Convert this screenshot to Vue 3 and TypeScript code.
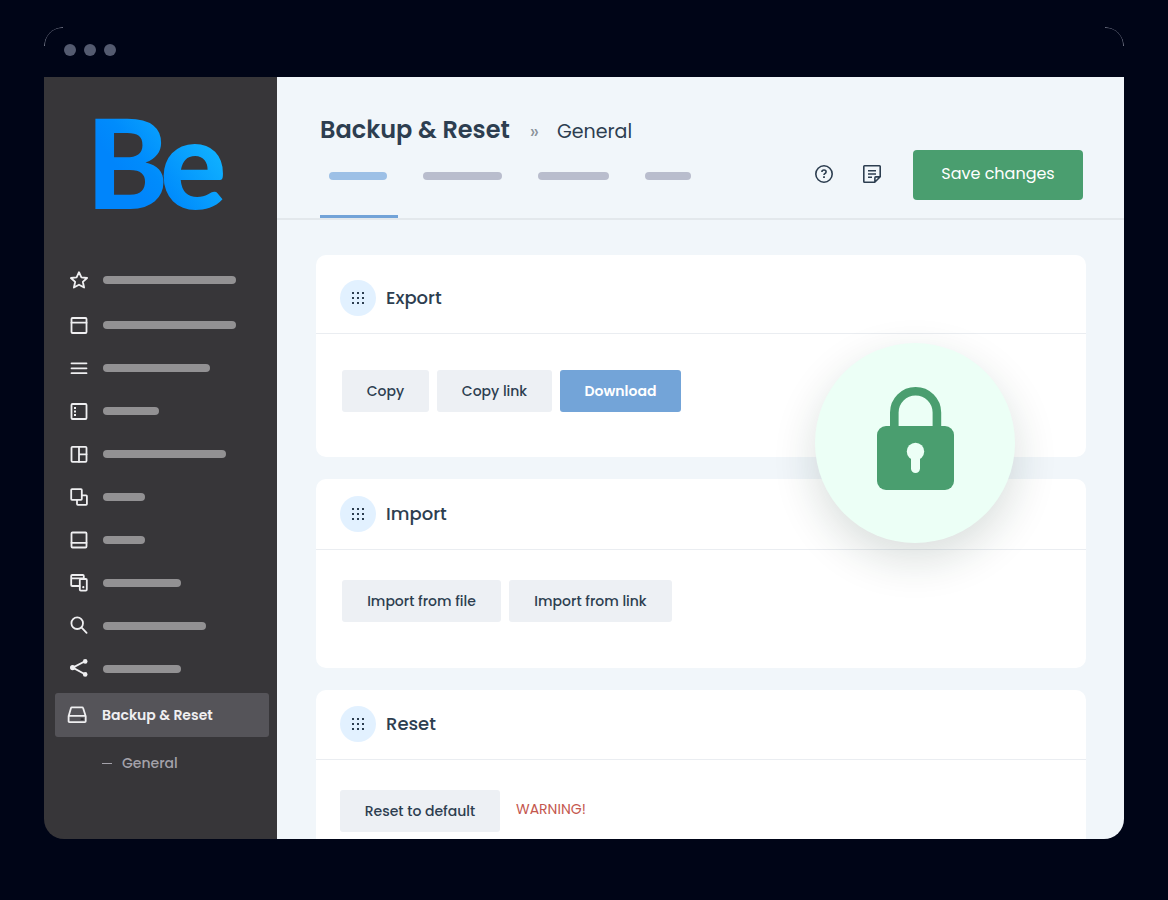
<script setup lang="ts">
interface MenuEntry {
  icon: string
  bar: number
  label: string
}
interface Action {
  label: string
  width: number
  primary?: boolean
}
interface Panel {
  id: string
  title: string
  actions: Action[]
  warning?: string
}

const menu: MenuEntry[] = [
  { icon: 'star', bar: 133, label: 'Favourites' },
  { icon: 'window', bar: 133, label: 'Header' },
  { icon: 'menu', bar: 107, label: 'Menu' },
  { icon: 'sidebar', bar: 56, label: 'Sidebars' },
  { icon: 'layout', bar: 123, label: 'Layout' },
  { icon: 'layers', bar: 42, label: 'Blog' },
  { icon: 'footer', bar: 42, label: 'Footer' },
  { icon: 'devices', bar: 78, label: 'Responsive' },
  { icon: 'search', bar: 103, label: 'Search' },
  { icon: 'share', bar: 78, label: 'Social' },
]

const tabs: number[] = [58, 79, 71, 46]

const panels: Panel[] = [
  {
    id: 'export',
    title: 'Export',
    actions: [
      { label: 'Copy', width: 87 },
      { label: 'Copy link', width: 115 },
      { label: 'Download', width: 121, primary: true },
    ],
  },
  {
    id: 'import',
    title: 'Import',
    actions: [
      { label: 'Import from file', width: 159 },
      { label: 'Import from link', width: 163 },
    ],
  },
  {
    id: 'reset',
    title: 'Reset',
    actions: [{ label: 'Reset to default', width: 160 }],
    warning: 'WARNING!',
  },
]
</script>

<template>
  <div class="page">
    <div class="window">
      <div class="titlebar"><i></i><i></i><i></i></div>
      <div class="body">
        <aside class="sidebar">
          <div class="logo">
            <svg viewBox="0 0 150 182" width="150" height="182">
              <defs>
                <linearGradient id="brand" gradientUnits="userSpaceOnUse" x1="50" y1="112" x2="128" y2="52">
                  <stop offset="0" stop-color="#0085fb" />
                  <stop offset=".25" stop-color="#008cfc" />
                  <stop offset="1" stop-color="#12b6ff" />
                </linearGradient>
              </defs>
              <text fill="url(#brand)" x="2 76" y="132">Be</text>
            </svg>
          </div>
          <nav class="menu">
            <a v-for="m in menu" :key="m.icon" class="item" href="#" :aria-label="m.label">
              <svg class="icon" viewBox="0 0 18 18">
                <path v-if="m.icon === 'star'" d="M9 1.2l2.4 5.2 5.7.6-4.3 3.8 1.3 5.7L9 13.7l-5.1 2.8 1.3-5.7L.9 7l5.7-.6z" />
                <template v-else-if="m.icon === 'window'">
                  <rect x="1.5" y="2" width="15" height="15" rx="1" /><path d="M1.5 6.7h15" />
                </template>
                <path v-else-if="m.icon === 'menu'" d="M1.5 4.3h15M1.5 9.3h15M1.5 14.2h15" />
                <template v-else-if="m.icon === 'sidebar'">
                  <rect x="1.5" y="2" width="15" height="15" rx="1" />
                  <path class="fill" d="M4 5h2v2H4zM4 8.5h2v2H4zM4 12h2v2H4z" />
                </template>
                <template v-else-if="m.icon === 'layout'">
                  <rect x="1.5" y="1.8" width="15" height="15" rx="1" /><path d="M9 1.8v15M9 9.3h7.5" />
                </template>
                <template v-else-if="m.icon === 'layers'">
                  <rect x="1.2" y="1.2" width="10.6" height="10.6" rx=".8" />
                  <path d="M12 7.3h4.1q.8 0 .8.8v8q0 .8-.8.8H7.8q-.8 0-.8-.8v-4.2" />
                </template>
                <template v-else-if="m.icon === 'footer'">
                  <rect x="1.5" y="1.5" width="15" height="15" rx="1" /><path d="M1.5 11.8h15" />
                </template>
                <template v-else-if="m.icon === 'devices'">
                  <path d="M9.5 12H2.2q-1 0-1-1V2q0-1 1-1h10.6q1 0 1 1v2.4M1.2 4.4h12.6" />
                  <rect x="9.8" y="5" width="7" height="11.6" rx="1" />
                  <circle class="fill" cx="13.3" cy="13.2" r="1.1" />
                </template>
                <template v-else-if="m.icon === 'search'">
                  <circle cx="7.2" cy="6.2" r="5.8" /><path d="M11.4 10.4L16.6 15.8" />
                </template>
                <template v-else>
                  <path d="M15 1.2L2.8 7.6 15 14.3" />
                  <circle class="fill" cx="15.2" cy="1.4" r="2.3" />
                  <circle class="fill" cx="2.6" cy="7.6" r="2.6" />
                  <circle class="fill" cx="15.2" cy="14.4" r="2.3" />
                </template>
              </svg>
              <span class="bar" :style="{ width: m.bar + 'px' }"></span>
            </a>
            <a class="item active" href="#">
              <svg class="icon drive" viewBox="0 0 20 18">
                <path d="M4.8 1.4h10.4q.7 0 .9.7l2.6 8.2v5q0 .9-.9.9H2.5q-.9 0-.9-.9v-5L4 2q.2-.6.8-.6zM1.6 9.9h17" />
                <path class="led" d="M14.4 13.1h1.6" />
              </svg>
              Backup &amp; Reset
            </a>
            <a class="sub" href="#"><i></i>General</a>
          </nav>
        </aside>

        <main class="main">
          <header class="header">
            <div class="heading">
              <div class="crumbs">
                <h1>Backup &amp; Reset</h1>
                <span class="sep">»</span>
                <span class="current">General</span>
              </div>
              <div class="tabs">
                <button
                  v-for="(w, i) in tabs"
                  :key="i"
                  class="tab"
                  :class="{ selected: i === 0 }"
                  :aria-label="'Tab ' + (i + 1)"
                >
                  <span class="bar" :style="{ width: w + 'px' }"></span>
                </button>
              </div>
            </div>
            <div class="tools">
              <button class="tool" aria-label="Help">
                <svg viewBox="0 0 18 18">
                  <circle cx="9" cy="9" r="8.2" />
                  <path d="M6.9 7q0-2 2.1-2t2.1 1.8q0 1.1-1.1 1.7-1 .5-1 1.5" />
                  <path class="fill" d="M8.1 11.3h1.8v1.8H8.1z" />
                </svg>
              </button>
              <button class="tool" aria-label="Notes">
                <svg viewBox="0 0 18 18">
                  <path d="M11.7 17.2H1.5q-.7 0-.7-.7v-15q0-.7.7-.7h15q.7 0 .7.7v10.2zM11.9 17v-4.3q0-.8.8-.8H17" />
                  <path d="M5 5.8h8M5 9h8M5 12.2h4" />
                </svg>
              </button>
              <button class="save">Save changes</button>
            </div>
          </header>

          <div class="content">
            <section v-for="p in panels" :key="p.id" class="card" :class="p.id">
              <div class="card-head">
                <span class="grip">
                  <svg viewBox="0 0 12 12">
                    <path d="M0 0h2v2H0zM5 0h2v2H5zM10 0h2v2h-2zM0 5h2v2H0zM5 5h2v2H5zM10 5h2v2h-2zM0 10h2v2H0zM5 10h2v2H5zM10 10h2v2h-2z" />
                  </svg>
                </span>
                <h2>{{ p.title }}</h2>
              </div>
              <div class="card-body">
                <button
                  v-for="a in p.actions"
                  :key="a.label"
                  class="btn"
                  :class="{ primary: a.primary }"
                  :style="{ minWidth: a.width + 'px' }"
                >
                  {{ a.label }}
                </button>
                <span v-if="p.warning" class="warning">{{ p.warning }}</span>
              </div>
            </section>

            <div class="lock">
              <svg viewBox="0 0 200 200">
                <path class="shackle" d="M79.3 86V69.5a21.3 21.3 0 0 1 42.6 0V86" />
                <rect class="case" x="62" y="83" width="77" height="64" rx="9" />
                <circle class="hole" cx="100.5" cy="108.5" r="8.7" />
                <path class="slot" d="M100.5 110v15.5" />
              </svg>
            </div>
          </div>
        </main>
      </div>
    </div>
  </div>
</template>

<style>
body {
  margin: 0;
  background: #000517;
}
</style>

<style scoped>
* {
  box-sizing: border-box;
}
.page {
  height: 100vh;
  padding: 27px 44px 61px;
  background: #000517;
  font-family: Poppins, Inter, 'Liberation Sans', sans-serif;
  color: #2d3e50;
}
button {
  border: 0;
  padding: 0;
  background: none;
  color: inherit;
  font: inherit;
  cursor: pointer;
}
a {
  color: inherit;
  text-decoration: none;
}
.window {
  display: flex;
  flex-direction: column;
  height: 100%;
  border-radius: 20px;
  overflow: hidden;
}
.titlebar {
  position: relative;
  flex: none;
  display: flex;
  align-items: center;
  gap: 8px;
  height: 50px;
  padding: 0 20px 4px;
}
.titlebar::before,
.titlebar::after {
  content: '';
  position: absolute;
  top: 0;
  width: 18px;
  height: 18px;
  border-top: 1px solid #7c8192;
}
.titlebar::before {
  left: 0;
  border-left: 1px solid #7c8192;
  border-top-left-radius: 18px;
}
.titlebar::after {
  right: 0;
  border-right: 1px solid #7c8192;
  border-top-right-radius: 18px;
}
.titlebar i {
  width: 12px;
  height: 12px;
  border-radius: 50%;
  background: #545b70;
}
.body {
  flex: 1;
  min-height: 0;
  display: flex;
}
.sidebar {
  flex: none;
  width: 233px;
  background: #373639;
}
.logo {
  height: 182px;
  padding-left: 40px;
}
.logo svg {
  display: block;
  font-family: Lato, sans-serif;
  font-weight: 900;
  font-size: 124px;
}
.menu {
  display: flex;
  flex-direction: column;
  gap: 1px;
}
.item {
  display: flex;
  align-items: center;
  gap: 15px;
  height: 42px;
  padding-left: 26px;
}
.item:first-child {
  margin-bottom: 2px;
}
.icon {
  flex: none;
  width: 18px;
  height: 18px;
  fill: none;
  stroke: #efeff1;
  stroke-width: 1.8;
  stroke-linejoin: round;
  stroke-linecap: round;
  overflow: visible;
}
.icon .fill {
  fill: #efeff1;
  stroke: none;
}
.drive {
  width: 20px;
}
.drive .led {
  stroke: #2e2d31;
}
.bar {
  display: block;
  height: 8px;
  border-radius: 4px;
  background: #929193;
}
.item.active {
  height: 44px;
  margin: 2px 8px 0 11px;
  padding-left: 12px;
  border-radius: 3px;
  background: #555459;
  color: #efeff1;
  font-size: 14px;
  font-weight: 600;
}
.sub {
  display: flex;
  align-items: center;
  gap: 10px;
  height: 50px;
  padding-left: 58px;
  color: #a4a2aa;
  font-size: 14px;
  font-weight: 500;
}
.sub i {
  width: 10px;
  height: 1px;
  background: #a4a2aa;
}
.main {
  flex: 1;
  min-width: 0;
  overflow: hidden;
  background: #f1f6fa;
}
.header {
  display: flex;
  justify-content: space-between;
  padding: 35px 41px 0 43px;
  border-bottom: 2px solid #e3e8ec;
}
.crumbs {
  display: flex;
  align-items: baseline;
  height: 36px;
}
h1 {
  margin: 0;
  font-size: 24px;
  line-height: 36px;
  font-weight: 600;
}
.sep {
  margin: 0 18px 0 20px;
  color: #8b929b;
  font-size: 20px;
}
.current {
  font-size: 19px;
}
.tabs {
  display: flex;
  gap: 16px;
}
.tab {
  display: flex;
  height: 70px;
  padding: 24px 11px 0 9px;
  border-bottom: 3px solid transparent;
}
.tab .bar {
  background: #b9bdcd;
}
.tab.selected {
  border-color: #72a3d8;
}
.tab.selected .bar {
  background: #9dc0e6;
}
.tools {
  display: flex;
  align-items: center;
  gap: 30px;
  height: 50px;
  margin-top: 38px;
}
.tool {
  display: flex;
  padding-bottom: 2px;
}
.tool svg {
  width: 18px;
  height: 18px;
  fill: none;
  stroke: #2d3e50;
  stroke-width: 1.6;
  stroke-linejoin: round;
}
.tool .fill {
  fill: #2d3e50;
  stroke: none;
}
.save {
  width: 170px;
  height: 50px;
  margin-left: 2px;
  padding-bottom: 4px;
  border-radius: 4px;
  background: #4a9e6f;
  color: #fff;
  font-size: 16px;
}
.content {
  position: relative;
  display: flex;
  flex-direction: column;
  gap: 22px;
  padding: 35px 38px 0 39px;
}
.card {
  border-radius: 10px;
  background: #fff;
}
.card-head {
  display: flex;
  align-items: center;
  gap: 10px;
  padding: 17px 24px;
  border-bottom: 1px solid #eaedf1;
}
.grip {
  display: flex;
  align-items: center;
  justify-content: center;
  width: 36px;
  height: 36px;
  border-radius: 50%;
  background: #e2f1ff;
}
.grip svg {
  width: 12px;
  height: 12px;
  fill: #2d3e50;
}
h2 {
  margin: 0;
  padding-bottom: 2px;
  font-size: 18px;
  font-weight: 500;
}
.card-body {
  display: flex;
  gap: 8px;
  padding: 30px 26px 46px;
}
.export .card-head {
  padding-top: 25px;
}
.export .card-body {
  padding-top: 36px;
  padding-bottom: 45px;
}
.reset .card-head {
  padding-top: 16px;
}
.reset .card-body {
  padding-left: 24px;
}
.btn {
  height: 42px;
  border-radius: 3px;
  background: #edf0f4;
  font-size: 14px;
  font-weight: 500;
}
.btn.primary {
  background: #73a4d8;
  color: #fff;
  font-weight: 600;
}
.warning {
  padding-left: 8px;
  color: #c4574e;
  font-size: 14px;
  line-height: 38px;
}
.lock {
  position: absolute;
  top: 123px;
  right: 109px;
  width: 200px;
  height: 200px;
  border-radius: 50%;
  background: #ecfff6;
  box-shadow: 0 16px 44px rgba(20, 50, 35, 0.16);
}
.lock svg {
  display: block;
}
.shackle {
  fill: none;
  stroke: #4a9e6f;
  stroke-width: 8.6;
}
.case {
  fill: #4a9e6f;
}
.hole {
  fill: #ecfff6;
}
.slot {
  stroke: #ecfff6;
  stroke-width: 9;
  stroke-linecap: round;
}
</style>
